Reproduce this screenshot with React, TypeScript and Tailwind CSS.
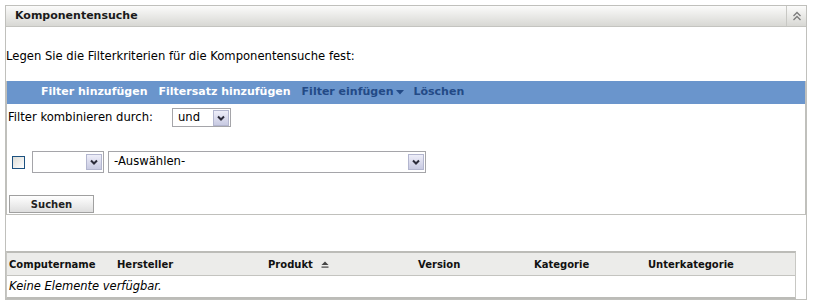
import React from 'react';

function ChevronDown() {
  return (
    <svg width="8" height="6" viewBox="0 0 8 6" className="block">
      <path d="M1 1.5 L4 4.5 L7 1.5" fill="none" stroke="#2b2b3a" strokeWidth="2" />
    </svg>
  );
}

function Select({ className, value }: { className: string; value?: string }) {
  return (
    <div className={`flex items-center border border-[#a5a5a9] bg-white ${className}`}>
      <span className="flex-1 pl-[5px] text-[11.6px] leading-none text-black">{value}</span>
      <span className="mr-[1px] flex h-[16px] w-[16px] items-center justify-center border border-[#b3b6cf] bg-linear-to-b from-[#eeeef9] to-[#c8cae2]">
        <ChevronDown />
      </span>
    </div>
  );
}

export default function App() {
  return (
    <div className="h-[304px] w-[814px] overflow-hidden bg-white pt-[5px] pl-[5px] font-['DejaVu_Sans',sans-serif] text-black">
      <div className="flex h-[295px] w-[802px] flex-col border border-[#c0c0bc]">
        {/* Panel header */}
        <div className="flex h-[21px] shrink-0 items-stretch border-b border-[#c4c4c0] bg-linear-to-b from-[#fbfbfa] to-[#d8d8d4]">
          <div className="flex flex-1 items-center pl-[9px] text-[11px] font-bold text-[#1a1a1a]">
            Komponentensuche
          </div>
          <div className="flex w-[20px] items-center justify-center border-l border-[#c8c8c4]">
            <svg width="10" height="10" viewBox="0 0 10 10" className="block">
              <path d="M1.5 5 L5 1.5 L8.5 5 M1.5 9 L5 5.5 L8.5 9" fill="none" stroke="#7a7a7a" strokeWidth="1.3" />
            </svg>
          </div>
        </div>

        <div className="flex h-[54px] shrink-0 items-center pt-[6px] text-[11.6px]">
          Legen Sie die Filterkriterien für die Komponentensuche fest:
        </div>

        {/* Filter box */}
        <div className="shrink-0 border-x border-b border-[#c0c0bc] pb-[1px]">
          <div className="flex h-[23px] items-center bg-[#6a95cc] pl-[34px] text-[11px] font-bold">
            <span className="text-white">Filter hinzufügen</span>
            <span className="ml-[11px] text-white">Filtersatz hinzufügen</span>
            <span className="ml-[11px] text-[#234a86]">Filter einfügen</span>
            <svg width="8" height="5" viewBox="0 0 8 5" className="ml-[3px] block">
              <path d="M0 0 H8 L4 4.5 Z" fill="#234a86" />
            </svg>
            <span className="ml-[9px] text-[#234a86]">Löschen</span>
          </div>

          <div className="mt-[4px] flex items-center pl-[1px] text-[11.6px]">
            <span className="w-[164px]">Filter kombinieren durch:</span>
            <Select className="h-[19px] w-[59px]" value="und" />
          </div>

          <div className="mt-[24px] flex items-center">
            <span className="ml-[5px] h-[13px] w-[13px] border border-[#1c5180] bg-linear-to-br from-[#dcdcd7] to-white" />
            <Select className="ml-[7px] h-[22px] w-[72px]" />
            <Select className="ml-[4px] h-[22px] w-[318px]" value="-Auswählen-" />
          </div>

          <div className="mt-[22px] pl-[2px]">
            <button className="flex h-[18px] w-[85px] items-center justify-center border border-[#a0a0a0] bg-linear-to-b from-white to-[#dedede] text-[10px] font-bold text-[#222]">
              Suchen
            </button>
          </div>
        </div>

        {/* Result table */}
        <div className="mt-[36px] mr-[10px] border-x border-x-[#c8c8c4] border-t-2 border-t-[#bcbcb8] border-b-2 border-b-[#bcbcb8]">
          <div className="grid h-[23px] grid-cols-[108px_151px_150px_116px_114px_1fr] items-center border-b border-[#c4c4c0] bg-[#ececea] text-[10px] font-bold text-[#111]">
            <span className="pl-[2px]">Computername</span>
            <span className="pl-[2px]">Hersteller</span>
            <span className="flex items-center pl-[2px]">
              Produkt
              <svg width="8" height="7" viewBox="0 0 8 7" className="ml-[8px] block">
                <path d="M0.5 4 L4 0.5 L7.5 4 Z" fill="#444" />
                <rect x="0.5" y="5.5" width="7" height="1.2" fill="#444" />
              </svg>
            </span>
            <span className="pl-[2px]">Version</span>
            <span className="pl-[2px]">Kategorie</span>
            <span className="pl-[2px]">Unterkategorie</span>
          </div>
          <div className="flex h-[21px] items-center pl-[2px] text-[11.5px] italic">
            Keine Elemente verfügbar.
          </div>
        </div>
      </div>
    </div>
  );
}
